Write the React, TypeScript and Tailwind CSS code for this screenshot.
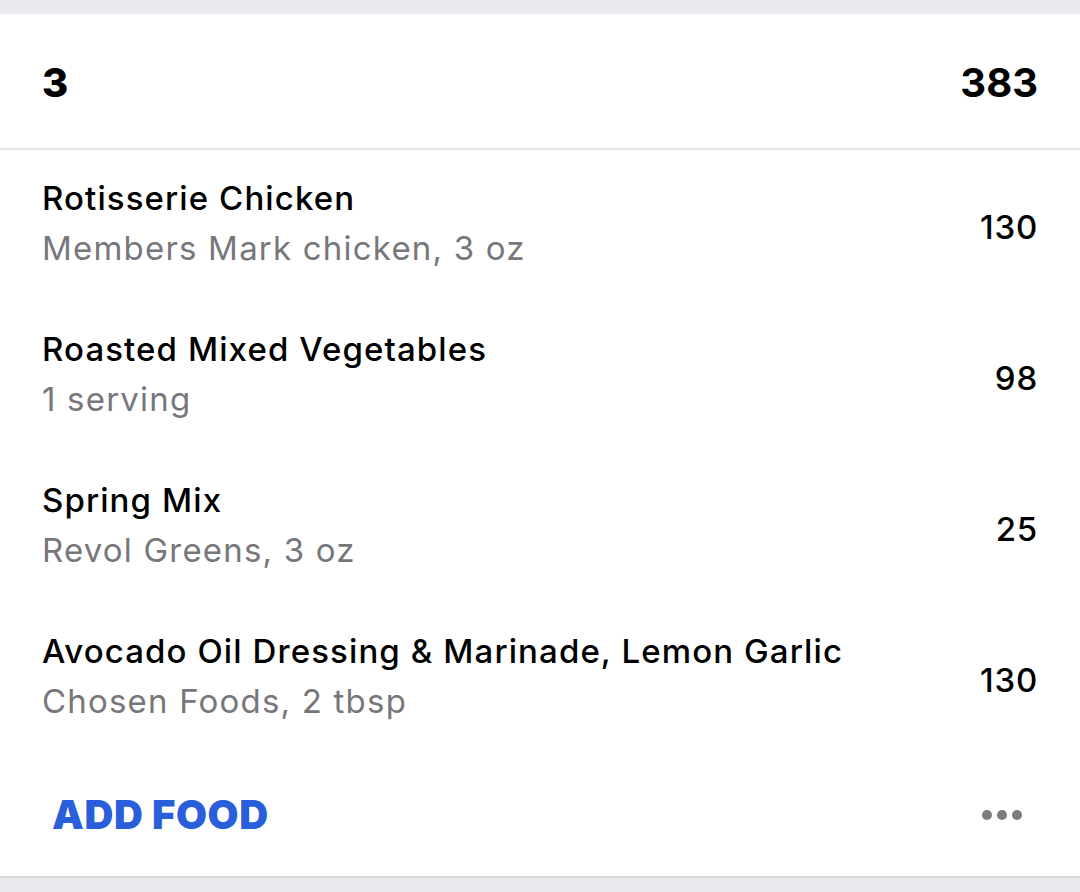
import React from "react";

type FoodItem = {
  name: string;
  detail: string;
  calories: number;
};

const items: FoodItem[] = [
  { name: "Rotisserie Chicken", detail: "Members Mark chicken, 3 oz", calories: 130 },
  { name: "Roasted Mixed Vegetables", detail: "1 serving", calories: 98 },
  { name: "Spring Mix", detail: "Revol Greens, 3 oz", calories: 25 },
  { name: "Avocado Oil Dressing & Marinade, Lemon Garlic", detail: "Chosen Foods, 2 tbsp", calories: 130 },
];

function FoodRow({ item }: { item: FoodItem }) {
  return (
    <div className="flex h-[151px] items-center justify-between px-[42px]">
      <div className="mb-[6px] flex flex-col">
        <span className="text-[33px] font-medium leading-[50px] tracking-[1.1px] text-black">{item.name}</span>
        <span className="text-[33px] leading-[50px] tracking-[1.2px] text-[#77777b]">{item.detail}</span>
      </div>
      <span className="pt-[4px] text-[33px] font-medium tracking-[0.8px] text-black">{item.calories}</span>
    </div>
  );
}

export default function App() {
  return (
    <div className="flex h-[892px] w-[1080px] flex-col bg-[#e9e9ee] font-['Inter',sans-serif]">
      <div className="h-[14px]" />
      <div className="flex flex-1 flex-col bg-white">
        <div className="flex h-[136px] items-center justify-between border-b-2 border-[#e4e4e7] px-[42px] pt-[4px]">
          <span className="text-[40px] font-extrabold text-black">3</span>
          <span className="text-[40px] font-bold text-black">383</span>
        </div>
        <div className="flex flex-col">
          {items.map((item) => (
            <FoodRow key={item.name} item={item} />
          ))}
        </div>
        <div className="flex flex-1 items-center justify-between pl-[52px] pr-[58px]">
          <span className="text-[40px] font-black tracking-[0.6px] text-[#2a5fdc]">ADD FOOD</span>
          <div className="flex gap-[5px]">
            <span className="h-[10px] w-[10px] rounded-full bg-[#7b7b80]" />
            <span className="h-[10px] w-[10px] rounded-full bg-[#7b7b80]" />
            <span className="h-[10px] w-[10px] rounded-full bg-[#7b7b80]" />
          </div>
        </div>
      </div>
      <div className="h-[16px] border-t-2 border-[#d8d8dc]" />
    </div>
  );
}
